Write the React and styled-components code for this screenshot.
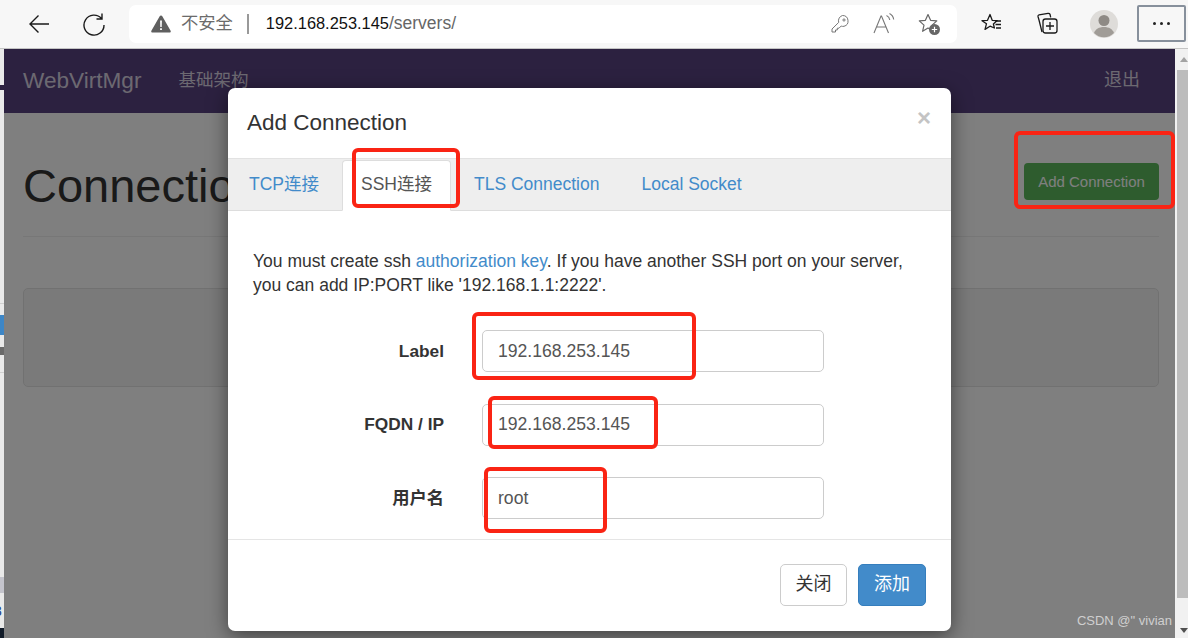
import React from 'react';
import styled, { createGlobalStyle } from 'styled-components';

const GlobalStyle = createGlobalStyle`
  html, body {
    margin: 0;
    padding: 0;
    height: 100%;
    overflow: hidden;
    background: #fff;
    font-family: "Liberation Sans", "Noto Sans CJK SC", sans-serif;
    line-height: 1.3;
  }
  * { box-sizing: border-box; }
`;

const tabs = [
  { label: 'TCP连接' },
  { label: 'SSH连接', active: true },
  { label: 'TLS Connection' },
  { label: 'Local Socket' },
];

const fields = [
  { label: 'Label', value: '192.168.253.145' },
  { label: 'FQDN / IP', value: '192.168.253.145' },
  { label: '用户名', value: 'root' },
];

const marks = [
  { left: 352, top: 148, width: 108, height: 60 },
  { left: 1014, top: 131, width: 161, height: 78 },
  { left: 472, top: 312, width: 224, height: 68 },
  { left: 488, top: 396, width: 170, height: 53 },
  { left: 484, top: 467, width: 123, height: 66 },
];

const stripBands = [
  { top: 36, height: 5, color: '#2c2140' },
  { top: 254, height: 1, color: '#cfcfcf' },
  { top: 266, height: 20, color: '#3d86c6' },
  { top: 298, height: 8, color: '#6a6a6a' },
  { top: 323, height: 1, color: '#cfcfcf' },
  { top: 528, height: 16, color: '#c4c4cc' },
  { top: 579, height: 10, color: '#101a28' },
];

const App = () => (
  <Screen>
    <GlobalStyle />
    <Toolbar>
      <NavIcons>
        <svg width="24" height="24" viewBox="0 0 24 24" fill="none" stroke="#1a1a1a" strokeWidth="1.4">
          <path d="M22 12H3.5M11.5 3.500 3 12l8.500 8.500" />
        </svg>
        <svg width="24" height="24" viewBox="0 0 24 24" fill="none" stroke="#1a1a1a" strokeWidth="1.4">
          <path d="M19.500 6.500A10 10 0 1 0 22 13M20 1.500v5.500h-5.500" />
        </svg>
      </NavIcons>
      <AddressBar>
        <svg width="20" height="18" viewBox="0 0 20 18">
          <path d="M10 0.500a1.500 1.500 0 0 1 1.300.8l8.300 14.500a1.200 1.200 0 0 1-1 1.800H1.400a1.200 1.200 0 0 1-1-1.800L8.700 1.300A1.500 1.500 0 0 1 10 .5z" fill="#5f5f5f" />
          <path d="M9.100 5.500h1.800l-.2 6.500H9.300zM9.100 13.300h1.800v1.800H9.100z" fill="#fff" />
        </svg>
        <Insecure>不安全</Insecure>
        <Divider />
        <Url>192.168.253.145<UrlPath>/servers/</UrlPath></Url>
        <AddressIcons>
          <svg width="22" height="22" viewBox="0 0 22 22" fill="none" stroke="#777" strokeWidth="1">
            <path d="M13.500 2.500a5.500 5.500 0 0 1 1.500 10.800c-1 .2-2 .1-2.800-.3L10 15.200H8.300v1.800H6.500v2H3v-3l6.700-6.600a5.500 5.500 0 0 1 3.800-6.900z" />
            <circle cx="15" cy="7" r="1.100" />
          </svg>
          <svg width="22" height="22" viewBox="0 0 22 22" fill="none" stroke="#777" strokeWidth="1.100">
            <path d="M1 20 8 3h.5l7 17M3.500 14h10M13.500 2.500c1.800.8 3 2.300 3.300 4.500M16.500 .5c2.300 1.200 3.800 3.300 4.200 6" />
          </svg>
          <svg width="24" height="24" viewBox="0 0 24 24" fill="none">
            <path d="M11 2.500l2.600 5.800 6.200.6-4.700 4.200 1.300 6.200-5.400-3.200-5.400 3.200 1.400-6.200L2.300 8.900l6.100-.6z" stroke="#666" strokeWidth="1.200" strokeLinejoin="round" />
            <circle cx="17.500" cy="17.500" r="5.500" fill="#666" />
            <path d="M17.500 14.800v5.400M14.800 17.500h5.400" stroke="#fff" strokeWidth="1.200" />
          </svg>
        </AddressIcons>
      </AddressBar>
      <ToolIcons>
        <svg width="24" height="24" viewBox="0 0 24 24" fill="none" stroke="#1a1a1a" strokeWidth="1.300" strokeLinejoin="round">
          <path d="M10 2.500l2.200 5.800 5 .3-3.800 3.400 1 4-4.400-1.800-5 3.200 1.500-5.700L2 8.700l5.500-.4z" />
          <path d="M15 9h6M15.500 12.500H21M16 16h5" />
        </svg>
        <svg width="24" height="24" viewBox="0 0 24 24" fill="none" stroke="#1a1a1a" strokeWidth="1.300">
          <path d="M4 8 3 4.500c-.2-1 .3-1.500 1-1.700l9-1.500c1-.1 1.700.2 2 1l.7 3M7 20 4 8" />
          <rect x="8" y="7" width="14" height="14" rx="2.500" />
          <path d="M15 10v8M11 14h8" />
        </svg>
        <Avatar>
          <svg width="28" height="28" viewBox="0 0 28 28">
            <circle cx="14" cy="14" r="14" fill="#dedcd9" />
            <circle cx="14" cy="10.500" r="5.500" fill="#8e8a85" />
            <path d="M4 23c1.500-4 5-6 10-6s8.500 2 10 6a14 14 0 0 1-20 0z" fill="#a09c97" />
          </svg>
        </Avatar>
        <MoreButton>
          <Dot /><Dot /><Dot />
        </MoreButton>
      </ToolIcons>
    </Toolbar>

    <Viewport>
      <LeftStrip>
        {stripBands.map((band) => (
          <StripBand key={band.top} $top={band.top} $height={band.height} $color={band.color} />
        ))}
        <StripGlyph>3</StripGlyph>
      </LeftStrip>
      <Page>
        <Navbar>
          <Brand>WebVirtMgr</Brand>
          <NavLink>基础架构</NavLink>
          <Logout>退出</Logout>
        </Navbar>
        <Content>
          <PageHeader>
            <Title>Connections</Title>
            <GreenButton>Add Connection</GreenButton>
          </PageHeader>
          <Well />
        </Content>
      </Page>
      <Scrollbar>
        <ScrollArrow />
        <ScrollThumb />
        <ScrollArrow $down />
      </Scrollbar>

      <Backdrop />

      <Modal>
        <ModalHeader>
          <ModalTitle>Add Connection</ModalTitle>
          <CloseX>×</CloseX>
        </ModalHeader>
        <TabBar>
          {tabs.map((tab) => (
            <Tab key={tab.label} $active={tab.active}>{tab.label}</Tab>
          ))}
        </TabBar>
        <ModalBody>
          <Intro>
            You must create ssh <IntroLink>authorization key</IntroLink>. If you have another SSH port on your server,
            you can add IP:PORT like '192.168.1.1:2222'.
          </Intro>
          <FormRows>
            {fields.map((field) => (
              <FormRow key={field.label}>
                <FieldLabel>{field.label}</FieldLabel>
                <FieldInput readOnly value={field.value} />
              </FormRow>
            ))}
          </FormRows>
        </ModalBody>
        <ModalFooter>
          <CloseButton>关闭</CloseButton>
          <PrimaryButton>添加</PrimaryButton>
        </ModalFooter>
      </Modal>
      <Watermark>CSDN @" vivian</Watermark>
    </Viewport>

    {marks.map((m) => (
      <RedMark key={m.left} style={{ left: m.left, top: m.top, width: m.width, height: m.height }} />
    ))}
  </Screen>
);

export default App;

const Screen = styled.div`
  position: relative;
  width: 1188px;
  height: 638px;
  display: flex;
  flex-direction: column;
  overflow: hidden;
`;

const Toolbar = styled.div`
  height: 49px;
  flex: none;
  display: flex;
  align-items: center;
  background: #f7f7f7;
  border-bottom: 1px solid #c4c4c4;
  padding: 0 0 1px 3px;
`;

const NavIcons = styled.div`
  display: flex;
  align-items: center;
  gap: 31px;
  width: 126px;
  padding-left: 24px;
`;

const AddressBar = styled.div`
  width: 828px;
  height: 38px;
  background: #fff;
  border-radius: 7px;
  display: flex;
  align-items: center;
  padding-left: 22px;
`;

const Insecure = styled.span`
  margin-left: 10px;
  font-size: 17.3px;
  color: #6b6b6b;
`;

const Divider = styled.span`
  width: 2px;
  height: 20px;
  margin: 0 17px 0 14px;
  background: #999;
`;

const Url = styled.span`
  font-size: 16.4px;
  color: #111;
`;

const UrlPath = styled.span`
  font-size: 17.5px;
  color: #666;
`;

const AddressIcons = styled.div`
  margin-left: auto;
  display: flex;
  align-items: center;
  gap: 22px;
  padding-right: 16px;
`;

const ToolIcons = styled.div`
  display: flex;
  align-items: center;
  margin-left: 23px;
  gap: 31px;
`;

const Avatar = styled.div`
  display: flex;
`;

const MoreButton = styled.div`
  width: 49px;
  height: 37px;
  margin-left: -12px;
  border: 2px solid #87909c;
  border-radius: 2px;
  display: flex;
  align-items: center;
  justify-content: center;
  gap: 4px;
`;

const Dot = styled.span`
  width: 3px;
  height: 3px;
  border-radius: 50%;
  background: #222;
`;

const Viewport = styled.div`
  position: relative;
  flex: 1;
  display: flex;
  min-height: 0;
`;

const LeftStrip = styled.div`
  position: relative;
  width: 4px;
  flex: none;
  background: #e9e9e9;
`;

const StripBand = styled.div`
  position: absolute;
  left: 0;
  width: 4px;
  top: ${(p) => p.$top}px;
  height: ${(p) => p.$height}px;
  background: ${(p) => p.$color};
`;

const StripGlyph = styled.span`
  position: absolute;
  left: -6px;
  top: 553px;
  width: 10px;
  overflow: hidden;
  font-size: 14px;
  color: #1b3f8b;
`;

const Page = styled.div`
  flex: 1;
  min-width: 0;
  background: #fff;
`;

const Navbar = styled.div`
  height: 64px;
  background: #584280;
  display: flex;
  align-items: center;
  padding: 0 35px 1px 19px;
  color: #d8d2e2;
`;

const Brand = styled.span`
  font-size: 22.6px;
`;

const NavLink = styled.span`
  margin-left: 37px;
  font-size: 17.5px;
`;

const Logout = styled.span`
  margin-left: auto;
  font-size: 18px;
`;

const Content = styled.div`
  padding: 0 16px 0 19px;
`;

const PageHeader = styled.div`
  height: 124px;
  padding-top: 22px;
  display: flex;
  align-items: center;
  justify-content: space-between;
  border-bottom: 1px solid #eee;
`;

const Title = styled.h1`
  margin: 0;
  font-size: 47px;
  font-weight: 400;
  color: #333;
`;

const GreenButton = styled.div`
  width: 135px;
  height: 37px;
  margin-top: -8px;
  display: flex;
  align-items: center;
  justify-content: center;
  background: #5cb85c;
  border-radius: 4px;
  color: #fff;
  font-size: 15px;
`;

const Well = styled.div`
  height: 99px;
  margin-top: 51px;
  background: #f5f5f5;
  border: 1px solid #e3e3e3;
  border-radius: 5px;
`;

const Scrollbar = styled.div`
  width: 13px;
  flex: none;
  display: flex;
  flex-direction: column;
  background: #f1f1f1;
`;

const ScrollArrow = styled.div`
  height: ${(p) => (p.$down ? '16px' : '21px')};
  flex: none;
  margin-top: ${(p) => (p.$down ? 'auto' : '0')};
  padding-left: 5px;
  display: flex;
  justify-content: center;
  align-items: center;
  &::before {
    content: '';
    border-left: 4px solid transparent;
    border-right: 4px solid transparent;
    ${(p) => (p.$down ? 'border-top: 5px solid #505050;' : 'border-bottom: 5px solid #a3a3a3;')}
  }
`;

const ScrollThumb = styled.div`
  height: 528px;
  flex: none;
  margin-left: 2px;
  background: #bcbcbc;
`;

const Backdrop = styled.div`
  position: absolute;
  top: 0;
  left: 4px;
  right: 13px;
  bottom: 0;
  background: rgba(0, 0, 0, 0.5);
`;

const Modal = styled.div`
  position: absolute;
  left: 228px;
  top: 39px;
  width: 723px;
  height: 543px;
  display: flex;
  flex-direction: column;
  background: #fff;
  border-radius: 7px;
  box-shadow: 0 5px 20px rgba(0, 0, 0, 0.5);
`;

const ModalHeader = styled.div`
  height: 70px;
  flex: none;
  display: flex;
  align-items: center;
  justify-content: space-between;
  padding: 0 19px;
`;

const ModalTitle = styled.h4`
  margin: 0;
  font-size: 22.5px;
  font-weight: 400;
  color: #333;
`;

const CloseX = styled.span`
  margin: -11px 1px 0 0;
  font-size: 24px;
  font-weight: 700;
  line-height: 1;
  color: #c4c4c4;
`;

const TabBar = styled.div`
  height: 53px;
  flex: none;
  display: flex;
  align-items: flex-end;
  background: #eee;
  border-top: 1px solid #e2e2e2;
  border-bottom: 1px solid #ddd;
`;

const Tab = styled.div`
  height: 51px;
  margin: ${(p) => (p.$active ? '0 2px -1px' : '0 0 -1px')};
  padding: ${(p) => (p.$active ? '0 18px 3px' : '0 20px 3px')};
  display: flex;
  align-items: center;
  font-size: 17.5px;
  color: ${(p) => (p.$active ? '#555' : '#428bca')};
  background: ${(p) => (p.$active ? '#fff' : 'transparent')};
  border: 1px solid ${(p) => (p.$active ? '#ddd' : 'transparent')};
  border-bottom-color: ${(p) => (p.$active ? '#fff' : 'transparent')};
  border-radius: 4px 4px 0 0;
`;

const ModalBody = styled.div`
  flex: 1;
  min-height: 0;
  padding: 38px 25px 0;
`;

const Intro = styled.p`
  margin: 0 0 33px;
  font-size: 17.5px;
  line-height: 24px;
  color: #333;
`;

const IntroLink = styled.span`
  color: #428bca;
`;

const FormRows = styled.div`
  display: flex;
  flex-direction: column;
  gap: 31.5px;
`;

const FormRow = styled.div`
  display: flex;
  align-items: center;
`;

const FieldLabel = styled.label`
  width: 191px;
  text-align: right;
  font-size: 17.3px;
  font-weight: 700;
  color: #333;
`;

const FieldInput = styled.input`
  width: 342px;
  height: 42px;
  margin-left: 38px;
  padding: 0 15px;
  border: 1px solid #ccc;
  border-radius: 5px;
  background: #fff;
  font: inherit;
  font-size: 17.6px;
  color: #555;
  outline: none;
`;

const ModalFooter = styled.div`
  height: 92px;
  flex: none;
  display: flex;
  align-items: center;
  justify-content: flex-end;
  gap: 11px;
  padding: 0 25px 1px 0;
  border-top: 1px solid #e5e5e5;
`;

const CloseButton = styled.div`
  width: 67px;
  height: 42px;
  display: flex;
  align-items: center;
  justify-content: center;
  border: 1px solid #ccc;
  border-radius: 5px;
  font-size: 18px;
  color: #333;
`;

const PrimaryButton = styled.div`
  width: 68px;
  height: 42px;
  display: flex;
  align-items: center;
  justify-content: center;
  background: #428bca;
  border: 1px solid #357ebd;
  border-radius: 5px;
  font-size: 18px;
  color: #fff;
`;

const Watermark = styled.span`
  position: absolute;
  right: 16px;
  bottom: 8px;
  font-size: 13px;
  color: #cfcfcf;
`;

const RedMark = styled.div`
  position: absolute;
  border: 4px solid #fa2414;
  border-radius: 6px;
`;
